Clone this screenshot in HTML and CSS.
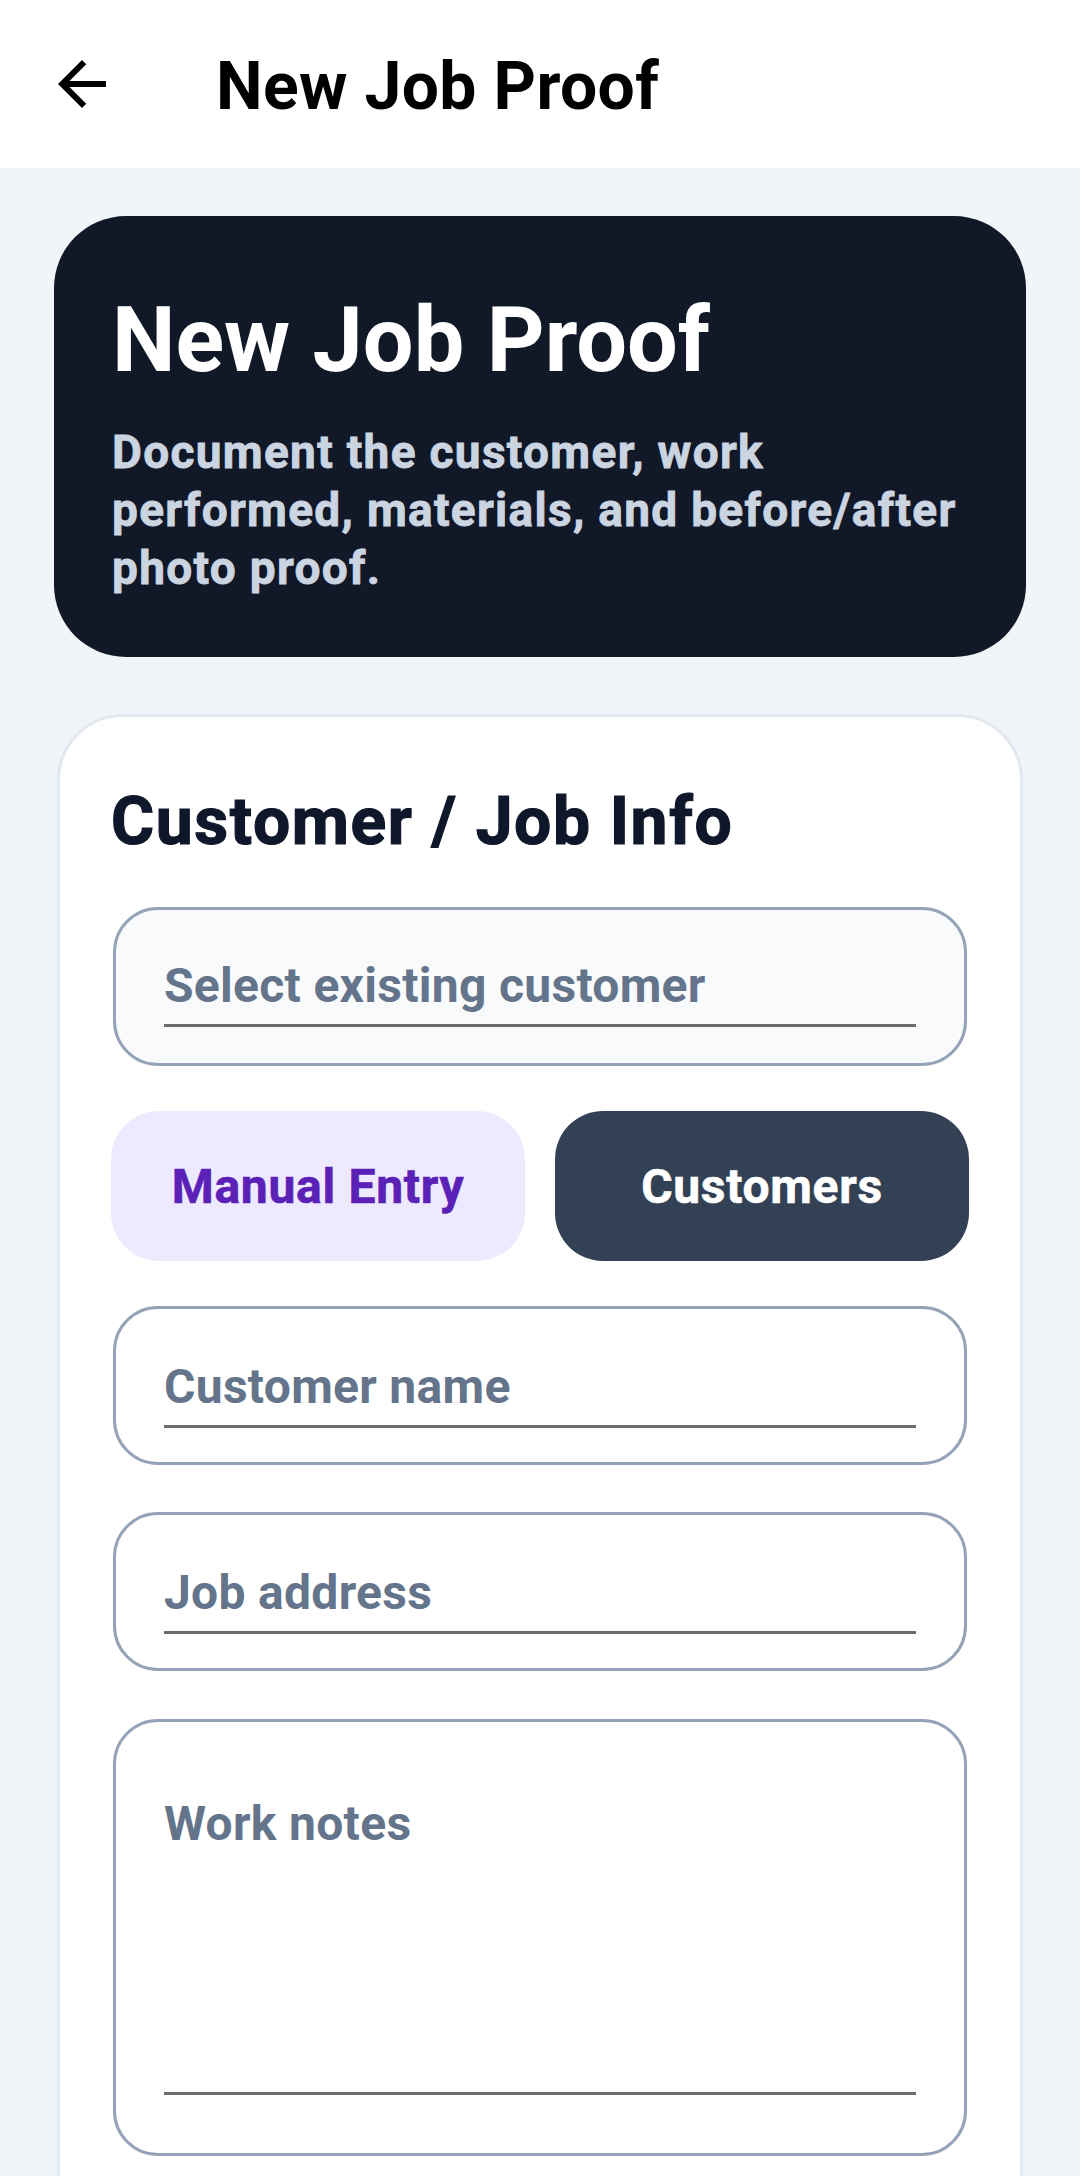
FILE: index.html
```html
<!DOCTYPE html>
<html lang="en">
<head>
<meta charset="utf-8">
<title>New Job Proof</title>
<link rel="stylesheet" href="styles.css">
</head>
<body>
<header class="appbar">
  <button class="back" aria-label="Back">
    <svg viewBox="0 0 24 24" width="72" height="72"><path d="M20 11H7.83l5.59-5.59L12 4l-8 8 8 8 1.41-1.41L7.83 13H20v-2z" fill="#000"/></svg>
  </button>
  <h1 class="appbar-title">New Job Proof</h1>
</header>
<main class="content">
  <section class="hero">
    <h2 class="hero-title">New Job Proof</h2>
    <p class="hero-text">Document the customer, work performed, materials, and before/after photo proof.</p>
  </section>
  <section class="card">
    <h3 class="card-title">Customer / Job Info</h3>
    <div class="field field-select"><div class="input">Select existing customer</div></div>
    <div class="toggle">
      <button class="btn btn-manual">Manual Entry</button>
      <button class="btn btn-customers">Customers</button>
    </div>
    <div class="field field-gap-s"><div class="input">Customer name</div></div>
    <div class="field field-gap-m"><div class="input">Job address</div></div>
    <div class="field field-notes"><div class="input input-notes">Work notes</div></div>
  </section>
</main>
</body>
</html>
```
FILE: styles.css
```css
html, body {
  margin: 0;
  padding: 0;
}
body {
  height: 2176px;
  overflow: hidden;
  background: #f1f5f9;
  font-family: Roboto, "Noto Sans", "Liberation Sans", sans-serif;
}
.appbar {
  height: 168px;
  background: #ffffff;
  display: flex;
  align-items: center;
}
.back {
  width: 72px;
  height: 72px;
  margin-left: 46px;
  padding: 0;
  border: 0;
  background: none;
  display: flex;
}
.appbar-title {
  margin: 5px 0 0 98px;
  font-size: 66px;
  line-height: 66px;
  font-weight: 700;
  letter-spacing: 0.35px;
  color: #000000;
}
.content {
  padding: 48px 54px 0;
}
.hero {
  background: #111827;
  border-radius: 72px;
  padding: 72px 56px 60px 58px;
}
.hero-title {
  margin: 0;
  font-size: 90px;
  line-height: 105px;
  font-weight: 700;
  color: #ffffff;
}
.hero-text {
  margin: 30px 0 0;
  font-size: 46px;
  line-height: 58px;
  font-weight: 700;
  letter-spacing: 1.3px;
  -webkit-text-stroke: 0.8px #cbd5e1;
  color: #cbd5e1;
}
.card {
  margin: 57px 3px 0;
  background: #ffffff;
  border: 3px solid #e2e8f0;
  border-radius: 66px;
  padding: 66px 51px 80px;
}
.card-title {
  margin: 0;
  font-size: 66px;
  line-height: 77px;
  font-weight: 700;
  letter-spacing: 1.6px;
  -webkit-text-stroke: 1.2px #0f172a;
  color: #0f172a;
}
.field {
  margin: 0 2px;
  border: 3px solid #94a3b8;
  border-radius: 45px;
  background: #ffffff;
  padding: 50px 48px 34px;
}
.field-select {
  margin-top: 47px;
  background: #f8fafc;
  padding-top: 48px;
  padding-bottom: 36px;
}
.input {
  border-bottom: 3px solid #6b6b6b;
  padding-bottom: 10px;
  font-size: 48px;
  line-height: 56px;
  font-weight: 700;
  letter-spacing: 0.3px;
  color: #64748b;
}
.toggle {
  margin-top: 45px;
  display: grid;
  grid-template-columns: 1fr 1fr;
  gap: 30px;
}
.btn {
  height: 150px;
  border: 0;
  border-radius: 48px;
  font-family: inherit;
  font-size: 48px;
  font-weight: 700;
  letter-spacing: 0.7px;
  padding: 0;
}
.btn-manual {
  background: #ede9fe;
  color: #5b21b6;
  -webkit-text-stroke: 0.6px #5b21b6;
}
.btn-customers {
  background: #334155;
  color: #ffffff;
  -webkit-text-stroke: 0.6px #ffffff;
}
.field-gap-s {
  margin-top: 45px;
}
.field-gap-m {
  margin-top: 47px;
}
.field-notes {
  margin-top: 48px;
  padding-top: 74px;
  padding-bottom: 58px;
}
.input-notes {
  height: 286px;
}
```
